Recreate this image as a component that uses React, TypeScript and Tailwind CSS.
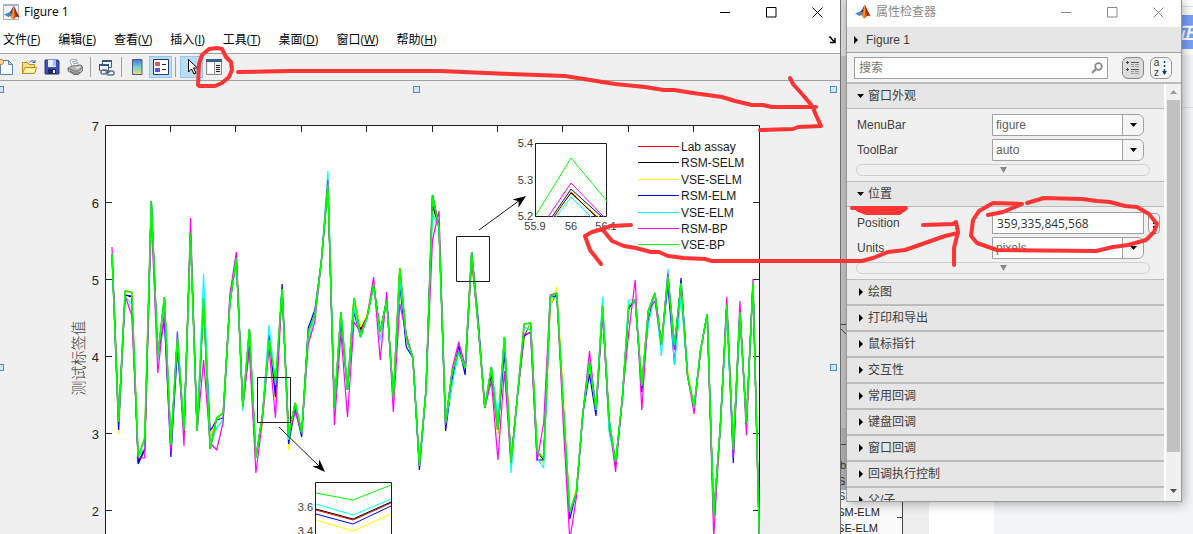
import React from "react";

interface Series {
  color: string;
  changes: Record<number, number>;
}

const UI_FONT = "font-['Liberation_Sans','Noto_Sans_CJK_SC',sans-serif]";
const TITLE_FONT = "font-['Open_Sans','Noto_Sans_CJK_SC',sans-serif]";

// main curve, one sample per 1% of the x axis, in canvas coordinates
const baseline = [
  254, 422, 291, 292, 457, 438, 201, 356, 297, 445, 338, 430, 233, 431, 298, 449, 418, 413, 304, 258,
  407, 329, 458, 415, 340, 380, 289, 435, 403, 433, 332, 315, 262, 185, 408, 312, 390, 298, 337, 317,
  285, 332, 300, 398, 268, 338, 358, 466, 390, 195, 228, 423, 372, 352, 368, 252, 327, 408, 367, 430,
  337, 463, 395, 324, 323, 452, 458, 297, 293, 407, 512, 492, 413, 362, 410, 306, 420, 462, 400, 306,
  300, 386, 311, 293, 345, 277, 345, 283, 376, 407, 350, 314, 517, 427, 305, 450, 312, 423, 283, 545,
];

const series: Series[] = [
  { color: "#ff0000", changes: { 16: 438, 19: 302, 26: 393, 39: 330, 56: 261, 60: 434, 78: 466 } },
  {
    color: "#000000",
    changes: { 3: 295, 4: 297, 5: 462, 6: 449, 15: 305, 26: 392, 39: 329, 50: 205, 59: 374, 60: 433, 64: 337, 67: 460, 68: 305, 77: 428, 80: 308, 88: 288 },
  },
  {
    color: "#ffff00",
    changes: { 2: 434, 3: 293, 15: 300, 16: 437, 24: 424, 26: 402, 28: 450, 39: 327, 40: 313, 42: 340, 50: 211, 60: 435, 64: 340, 67: 464, 68: 307, 69: 287, 70: 395, 72: 488, 88: 293, 89: 370 },
  },
  {
    color: "#0000ff",
    changes: {
      2: 430, 3: 295, 4: 296, 5: 464, 6: 450, 9: 320, 10: 457, 11: 350, 16: 431, 17: 420, 18: 418, 22: 345, 25: 335, 26: 397, 27: 284,
      28: 444, 29: 408, 30: 437, 31: 328, 32: 310, 36: 320, 38: 312, 45: 285, 46: 347, 48: 470, 51: 225, 52: 431, 53: 380, 54: 346,
      55: 375, 57: 320, 61: 352, 64: 336, 65: 332, 66: 460, 67: 460, 69: 296, 71: 519, 74: 374, 75: 416, 78: 464, 80: 307, 82: 392,
      83: 320, 86: 285, 87: 364, 88: 278, 96: 463,
    },
  },
  {
    color: "#00ffff",
    changes: {
      3: 296, 4: 305, 6: 448, 8: 360, 11: 331, 15: 274, 16: 445, 17: 428, 18: 420, 21: 411, 25: 325, 26: 385, 28: 440, 31: 342,
      34: 171, 38: 308, 42: 340, 45: 280, 50: 214, 53: 385, 60: 418, 62: 473, 64: 327, 65: 330, 66: 458, 67: 468, 69: 298, 76: 297,
      77: 432, 80: 300, 83: 325, 85: 356, 86: 269, 87: 365, 88: 297, 95: 316,
    },
  },
  {
    color: "#ff00ff",
    changes: {
      1: 247, 3: 296, 4: 315, 5: 458, 6: 458, 7: 215, 8: 373, 9: 312, 10: 452, 11: 332, 12: 446, 13: 218, 15: 360, 16: 443, 17: 450,
      18: 422, 19: 295, 20: 252, 22: 350, 23: 473, 24: 420, 25: 348, 26: 418, 29: 412, 31: 344, 32: 322, 34: 180, 35: 425, 36: 333,
      37: 417, 38: 322, 39: 332, 41: 277, 42: 360, 43: 292, 44: 412, 45: 304, 46: 334, 50: 240, 51: 211, 52: 425, 53: 369, 54: 342,
      55: 366, 59: 381, 60: 460, 61: 371, 64: 334, 65: 333, 66: 461, 67: 423, 68: 295, 70: 425, 71: 540, 72: 497, 74: 351, 76: 316,
      78: 472, 80: 333, 81: 280, 82: 410, 84: 301, 86: 273, 87: 350, 90: 414, 93: 537, 95: 297, 96: 458, 97: 301, 98: 435, 99: 279,
    },
  },
  { color: "#00ff00", changes: {} },
];

const legend = [
  { label: "Lab assay", color: "#ff0000" },
  { label: "RSM-SELM", color: "#000000" },
  { label: "VSE-SELM", color: "#ffff00" },
  { label: "RSM-ELM", color: "#0000ff" },
  { label: "VSE-ELM", color: "#00ffff" },
  { label: "RSM-BP", color: "#ff00ff" },
  { label: "VSE-BP", color: "#00ff00" },
];

const toPoints = (changes: Record<number, number>) =>
  baseline.map((y, i) => `${(105.5 + 6.54 * (i + 1)).toFixed(1)},${changes[i + 1] ?? y}`).join(" ");

const menus = [
  { text: "文件", hotkey: "F" },
  { text: "编辑", hotkey: "E" },
  { text: "查看", hotkey: "V" },
  { text: "插入", hotkey: "I" },
  { text: "工具", hotkey: "T" },
  { text: "桌面", hotkey: "D" },
  { text: "窗口", hotkey: "W" },
  { text: "帮助", hotkey: "H" },
];

const collapsedGroups = ["绘图", "打印和导出", "鼠标指针", "交互性", "常用回调", "键盘回调", "窗口回调", "回调执行控制", "父/子"];

const MatlabLogo = () => (
  <svg viewBox="0 0 16 16" className="size-4 shrink-0">
    <path d="M0 9.5 5 7.5l2.5 2L4.5 12z" fill="#3d8ec4" />
    <path d="M5 7.5C7 7 8 3 9.8 1L7.5 9.5z" fill="#2b4c7d" />
    <path d="M9.8 1C11 2 13 8 15.8 12.5c-2-1.8-3.5-.8-5 .8C9.5 15 8.5 14.5 7.5 12.5 6.8 11 5.8 11 4.5 12c3-2 4-7 5.3-11z" fill="#d9541e" />
    <path d="M9.8 1c-.6 4-.8 8-2.8 10.5 1 1.5 1.5 3 2.3 3C9.8 10 10.5 5 9.8 1z" fill="#f4a12a" />
    <path d="M10.2 1.8c1 1.8 3 7 5.6 10.7-1.5-1.3-2.8-1-3.8-.4z" fill="#9c2412" />
  </svg>
);

const WindowButtons = ({ className }: { className: string }) => (
  <div className={`ml-auto flex ${className}`}>
    <button aria-label="Minimize" className="flex h-6 w-[46px] items-center justify-center">
      <svg viewBox="0 0 11 11" className="size-[11px]" stroke="currentColor" fill="none">
        <path d="M0 5.5h10" />
      </svg>
    </button>
    <button aria-label="Maximize" className="flex h-6 w-[46px] items-center justify-center">
      <svg viewBox="0 0 11 11" className="size-[11px]" stroke="currentColor" fill="none">
        <path d="M.5.5h9.5v9.5H.5z" />
      </svg>
    </button>
    <button aria-label="Close" className="flex h-6 w-[46px] items-center justify-center">
      <svg viewBox="0 0 11 11" className="size-[11px]" stroke="currentColor" fill="none">
        <path d="m.5.5 10 10m0-10-10 10" />
      </svg>
    </button>
  </div>
);

const NewIcon = () => (
  <svg viewBox="0 0 16 16" className="size-4">
    <path d="M2.5 1.5h8l4 4v10h-12z" fill="#f8fbff" stroke="#6080b8" />
    <path d="M10.5 1.5v4h4z" fill="#c5d7f2" stroke="#6080b8" />
    <circle cx="3" cy="3" r="2.5" fill="#ffe0a0" stroke="#e8732c" />
  </svg>
);

const OpenIcon = () => (
  <svg viewBox="0 0 16 16" className="size-4">
    <path d="M1.5 14.5v-11h5l1.5 2h5.5v9z" fill="#fbe28a" stroke="#c28b1c" />
    <path d="m1.5 14.5 2.5-6h11.5l-2 6z" fill="#fff3ae" stroke="#c28b1c" />
    <path d="M8.500 3.500c1-2 4-2.500 5 0m-2 0h2.500V1" fill="none" stroke="#3a5f93" />
  </svg>
);

const SaveIcon = () => (
  <svg viewBox="0 0 16 16" className="size-4">
    <path d="M1 1h13l1 1v13H1z" fill="#3c4fb5" stroke="#28348c" />
    <path d="M4 1h8v7H4z" fill="#e6eefc" />
    <path d="M9 1h3v6H9z" fill="#a9bce8" />
    <path d="M4 10h8v5H4z" fill="#1e2760" />
    <path d="M9 11h2v3H9z" fill="#fff" />
  </svg>
);

const PrintIcon = () => (
  <svg viewBox="0 0 16 16" className="size-4">
    <path d="m3 1 6-1 3 7-7 1z" fill="#fff" stroke="#9aa3b5" />
    <path d="m5 3 4-1m-3 3 4-1" stroke="#7a93c8" />
    <path d="m1 9 4-2 9-1 1.5 2v4l-4 3.500H7L1 12z" fill="#b9b9b9" stroke="#777" />
    <path d="m1 9 6 3h4.500l4-4M3 12l5 2.500 5-1" fill="none" stroke="#666" />
    <path d="m9 9 4-1" stroke="#fff" />
  </svg>
);

const LinkIcon = () => (
  <svg viewBox="0 0 17 17" className="size-[17px]">
    <path d="M4.500 1.500h9v7h-9z" fill="#fff" stroke="#35598c" />
    <path d="M4 2h10" stroke="#35598c" strokeWidth="2" />
    <path d="M1.500 5.500h9v6h-9z" fill="#fff" stroke="#35598c" />
    <path d="M1 6h10" stroke="#35598c" strokeWidth="2" />
    <g fill="none" stroke="#60758f" strokeWidth="1.5">
      <rect x="3" y="11" width="7" height="4" rx="2" />
      <rect x="9" y="12" width="7" height="4" rx="2" />
    </g>
    <path d="M7 13h5" stroke="#31475f" />
  </svg>
);

const ColorbarIcon = () => (
  <svg viewBox="0 0 16 16" className="size-4">
    <defs>
      <linearGradient id="colorbar" x1="0" x2="0" y1="0" y2="1">
        <stop offset="0" stopColor="#4f6fdc" />
        <stop offset=".5" stopColor="#6fd3d0" />
        <stop offset="1" stopColor="#f7dc72" />
      </linearGradient>
    </defs>
    <path d="M3.500.5h9.500v15H3.500z" fill="url(#colorbar)" stroke="#4a5a80" />
  </svg>
);

const LegendIcon = () => (
  <svg viewBox="0 0 16 16" className="size-4">
    <path d="M.5.5h15v15H.5z" fill="#fff" stroke="#1c3a6c" />
    <path d="M2 3h5v4H2z" fill="#e05555" />
    <path d="M2 9h5v4H2z" fill="#5555e0" />
    <path d="M9 5.500h4m-4 5h4" stroke="#222" />
  </svg>
);

const PointerIcon = () => (
  <svg viewBox="0 0 16 16" className="size-4">
    <path d="M4.500.5v12.500l3-3 2.500 5 2-1-2.500-5h4z" fill="#fff" stroke="#000" />
  </svg>
);

const InspectorIcon = () => (
  <svg viewBox="0 0 16 16" className="size-4">
    <path d="M.5.5h15v15H.5z" fill="#ededed" stroke="#8b8b8b" />
    <path d="M0 0h16v3H0z" fill="#34618c" />
    <path d="M2 4h6v10H2z" fill="#fff" />
    <path d="M8.500 3v12" stroke="#999" />
    <path d="M10 6.500h4m-4 2h4m-4 2h4m-4 2h4" stroke="#222" />
  </svg>
);

const Divider = () => <div className="h-5 w-px bg-[#a0a0a0]" />;

const ArrowHead = ({ x, y, angle }: { x: number; y: number; angle: number }) => (
  <path d="M0 0-13-5-9 0-13 5z" fill="#000" transform={`translate(${x} ${y}) rotate(${angle})`} />
);

const Plot = () => (
  <svg viewBox="0 81 840 453" className={`block w-full ${UI_FONT}`}>
    <defs>
      <clipPath id="zoomTop">
        <rect x="536" y="144" width="71" height="73" />
      </clipPath>
      <clipPath id="axes">
        <rect x="105" y="125" width="656" height="420" />
      </clipPath>
    </defs>
    <path d="M105.500 545V125.500h654V545" fill="#fff" stroke="#1c1c1c" />
    <g stroke="#262626">
      {[1, 2, 3, 4, 5, 6, 7, 8, 9].map((n) => (
        <path key={n} d={`M${Math.floor(105 + n * 65.4) + 0.5} 125v7`} />
      ))}
      {[202.5, 279.5, 356.5, 433.5, 510.5].map((y) => (
        <path key={y} d={`M105 ${y}h7M760 ${y}h-7`} />
      ))}
    </g>
    <g fill="#262626" fontSize="13" textAnchor="end">
      {[7, 6, 5, 4, 3, 2].map((n, i) => (
        <text key={n} x="99" y={131 + i * 77}>
          {n}
        </text>
      ))}
    </g>
    <text transform="translate(84 358) rotate(-90)" textAnchor="middle" fontSize="15" fill="#404040" className="font-light">
      测试标签值
    </text>

    <g clipPath="url(#axes)" fill="none" strokeLinejoin="bevel">
      {series.map((s) => (
        <polyline key={s.color} points={toPoints(s.changes)} stroke={s.color} strokeWidth={s.color === "#00ff00" ? 1.6 : 1.2} />
      ))}
    </g>

    <g fill="none" stroke="#1c1c1c">
      <path d="M456.500 236.500h33v45h-33zM257.500 377.500h33v45h-33z" />
      <path d="M479 230 520 200M279 427l42 41" />
    </g>
    <ArrowHead x={526} y={196} angle={-36} />
    <ArrowHead x={325} y={472} angle={45} />

    {/* magnified peak at x = 56 */}
    <path d="M535.500 143.500h71v73h-71z" fill="#fff" stroke="#1c1c1c" />
    <g clipPath="url(#zoomTop)" fill="none">
      <polyline points="556,217 571,197 591,217" stroke="#00ffff" />
      <polyline points="554,217 571,192 596,217" stroke="#ff0000" />
      <polyline points="553,217 571,193 597,217" stroke="#000000" />
      <polyline points="553,217 571,191 599,217" stroke="#ffff00" />
      <polyline points="552,217 571,189 602,217" stroke="#0000ff" />
      <polyline points="548,217 571,183 604,217" stroke="#ff00ff" />
      <polyline points="536,215 571,158 607,201" stroke="#00ff00" />
    </g>
    <g fill="#404040" fontSize="11">
      <text x="533" y="147" textAnchor="end">5.4</text>
      <text x="533" y="184" textAnchor="end">5.3</text>
      <text x="533" y="220" textAnchor="end">5.2</text>
      <text x="535" y="230" textAnchor="middle">55.9</text>
      <text x="571" y="230" textAnchor="middle">56</text>
      <text x="606" y="230" textAnchor="middle">56.1</text>
    </g>

    {/* magnified valley, cut off by the window edge */}
    <path d="M315.500 545v-62.500h76V545" fill="#fff" stroke="#1c1c1c" />
    <g fill="none">
      <polyline points="316,493 353,500 391,485" stroke="#00ff00" />
      <polyline points="316,504 353,515 391,499" stroke="#00ffff" />
      <polyline points="316,510 353,520 391,503" stroke="#ff0000" />
      <polyline points="316,509 353,519 391,502" stroke="#000000" />
      <polyline points="316,514 353,524 391,506" stroke="#0000ff" />
      <polyline points="316,520 353,531 391,514" stroke="#ffff00" />
    </g>
    <g fill="#404040" fontSize="11" textAnchor="end">
      <text x="313" y="511">3.6</text>
      <text x="313" y="535">3.4</text>
    </g>

    <g fontSize="12">
      {legend.map((item, i) => {
        const y = 147 + Math.round(i * 16.4);
        return (
          <g key={item.label}>
            <path d={`M638 ${y - 0.5}h41`} stroke={item.color} />
            <text x="681" y={y + 4} fill="#1a1a1a">
              {item.label}
            </text>
          </g>
        );
      })}
    </g>

    {/* selection handles */}
    <g fill="#cfe6f7" stroke="#4f8fc0">
      {[
        [0, 89],
        [416, 89],
        [833, 89],
        [0, 367],
        [833, 367],
      ].map(([x, y]) => (
        <rect key={`${x}-${y}`} x={x - 2.5} y={y - 2.5} width="6" height="6" />
      ))}
    </g>
  </svg>
);

const FigureWindow = () => (
  <section className="min-w-0 flex-1 overflow-hidden bg-[#f0f0f0]">
    <header className={`flex h-6 items-center bg-white pl-1 text-[12px] text-black ${TITLE_FONT}`}>
      <div className="-ml-px flex size-4 items-center border border-t-2 border-[#a8b4c4] bg-[#f4f4f4]">
        <MatlabLogo />
      </div>
      <h1 className="ml-1 pl-px">Figure 1</h1>
      <WindowButtons className="text-black" />
    </header>
    <nav className={`flex h-[30px] items-center gap-[18px] border-b border-[#a0a0a0] bg-white pt-[2px] pl-[3px] text-[12px] text-black ${TITLE_FONT}`}>
      {menus.map((m) => (
        <button key={m.hotkey} className="whitespace-nowrap">
          {m.text}(<span className="underline">{m.hotkey}</span>)
        </button>
      ))}
      <svg viewBox="0 0 8 8" className="mr-1 ml-auto size-2" fill="none" stroke="#000">
        <path d="M1 1.500c1-.8 1.500-.5 2 .5l3 3.500M2 6.500h5V2" strokeWidth="1.5" />
      </svg>
    </nav>
    <div className="flex h-[27px] items-center border-b border-[#a0a0a0]">
      <div className="flex items-center gap-[7px]">
        <button aria-label="New" className="-ml-[2px]"><NewIcon /></button>
        <button aria-label="Open"><OpenIcon /></button>
        <button aria-label="Save"><SaveIcon /></button>
        <button aria-label="Print"><PrintIcon /></button>
        <Divider />
        <button aria-label="Link plot"><LinkIcon /></button>
      </div>
      <div className="ml-[6px] flex items-center">
        <Divider />
        <button aria-label="Insert colorbar" className="pr-1 pl-[7px]"><ColorbarIcon /></button>
        <button aria-label="Insert legend" className="flex h-[22px] w-[23px] items-center justify-center border border-[#90c8f6] bg-[#bcdcf4]">
          <LegendIcon />
        </button>
        <div className="pr-1 pl-[3px]"><Divider /></div>
        <button aria-label="Edit plot" className="flex h-[22px] w-[23px] items-center justify-center border border-[#90c8f6] bg-[#bcdcf4]">
          <PointerIcon />
        </button>
        <button aria-label="Open property inspector" className="px-[3px]"><InspectorIcon /></button>
      </div>
    </div>
    <Plot />
  </section>
);

const GroupHeader = ({ title, open = false }: { title: string; open?: boolean }) => (
  <button className="flex h-6 w-full shrink-0 items-center gap-1 bg-[#e6e6e6] pl-[10px] text-left text-[12px] text-[#404040]">
    <svg viewBox="0 0 7 8" className="h-2 w-[7px]">
      <path d={open ? "M0 2h7L3.500 6z" : "M2 0v8l4-4z"} fill="#000" />
    </svg>
    {title}
  </button>
);

const Expander = () => (
  <button aria-label="Show more" className="mr-[14px] ml-[9px] flex h-[12px] items-center justify-center rounded-md border border-[#d0d0d0]">
    <svg viewBox="0 0 7 6" className="h-[6px] w-[7px]">
      <path d="M0 0h7L3.500 6z" fill="#888" />
    </svg>
  </button>
);

const SelectRow = ({ id, value }: { id: string; value: string }) => (
  <div className="flex h-[22px] items-center pl-[10px]">
    <label htmlFor={id} className="w-[135px]">
      {id}
    </label>
    <div className="relative h-[22px] w-[152px]">
      <select id={id} defaultValue={value} className="block h-full w-full appearance-none rounded-r-md border border-[#a0a0a0] bg-white pl-[3px] text-[12px] text-[#606060]">
        <option>{value}</option>
      </select>
      <div className="pointer-events-none absolute inset-y-px right-px flex w-[21px] items-center justify-center rounded-r-md border-l border-[#a0a0a0] bg-[#f5f5f5]">
        <svg viewBox="0 0 7 4" className="h-1 w-[7px]">
          <path d="M0 0h7L3.500 4z" fill="#000" />
        </svg>
      </div>
    </div>
  </div>
);

const Inspector = () => (
  <aside className={`relative mr-[11px] ml-[6px] flex h-[502px] flex-col overflow-hidden border border-t-0 border-[#999] bg-[#f0f0f0] text-[12px] text-[#404040] shadow-[2px_2px_10px_rgba(0,0,0,0.3)] ${UI_FONT}`}>
    <header className="flex h-[27px] shrink-0 items-start bg-white pl-2">
      <div className="flex h-6 items-center gap-[5px] text-[#8a8a8a]">
        <MatlabLogo />
        <h2>属性检查器</h2>
      </div>
      <WindowButtons className="text-[#8a8a8a]" />
    </header>
    <button className="flex h-[26px] shrink-0 items-center gap-2 border-b border-[#a0a0a0] bg-[#e6e6e6] pl-[7px] text-left">
      <svg viewBox="0 0 4 8" className="h-2 w-1">
        <path d="M0 0v8l4-4z" fill="#000" />
      </svg>
      <span>Figure 1</span>
    </button>
    <div className="flex h-[31px] shrink-0 items-center border-b-2 border-[#bcbcbc] bg-[#f3f3f3] pr-[9px] pl-[7px]">
      <div className="flex h-[22px] flex-1 items-center border border-[#a0a0a0] bg-white px-1">
        <input aria-label="搜索" placeholder="搜索" className="min-w-0 flex-1 text-[12px] outline-none placeholder:text-[#777]" />
        <svg viewBox="0 0 12 12" className="size-3" fill="none" stroke="#8a8a8a">
          <circle cx="7.5" cy="4.5" r="3.3" strokeWidth="1.8" />
          <path d="M5 7 1 11" strokeWidth="2.2" />
        </svg>
      </div>
      <button aria-label="Group" className="ml-[14px] flex size-[22px] items-center justify-center rounded-md border border-[#888] bg-[#dcdcdc]">
        <svg viewBox="0 0 16 16" className="size-4" fill="none" stroke="#999">
          <path d="M6 2.500h8M6 9.500h8" stroke="#555" />
          <path d="M6 4.500h3m1 0h4m-8 2h3m1 0h4m-8 5h3m1 0h4m-8 2h3m1 0h4" />
          <path d="M1 2.500h3M2.500 1v3M1 9.500h3M2.500 8v3" stroke="#444" />
        </svg>
      </button>
      <button aria-label="Sort" className="ml-[6px] flex size-[22px] items-center justify-center gap-[2px] rounded-md border border-[#999] bg-[#f8f8f8]">
        <span className="flex flex-col text-[10px] leading-[10px] text-[#333]">
          <span>a</span>
          <span>z</span>
        </span>
        <svg viewBox="0 0 7 16" className="h-4 w-[7px]" fill="none" stroke="#15406b">
          <path d="M3.500 1v2m0 2v2m0 2v5" strokeWidth="1.5" />
          <path d="M1 11h5l-2.500 4z" fill="#15406b" stroke="none" />
        </svg>
      </button>
    </div>

    <div className="flex min-h-0 flex-1">
      <div className="flex min-w-0 flex-1 flex-col overflow-hidden">
        <GroupHeader title="窗口外观" open />
        <div className="flex h-[74px] shrink-0 flex-col gap-[3px] border-y border-[#bcbcbc] pt-[5px]">
          <SelectRow id="MenuBar" value="figure" />
          <SelectRow id="ToolBar" value="auto" />
          <Expander />
        </div>
        <GroupHeader title="位置" open />
        <div className="flex h-[74px] shrink-0 flex-col gap-[3px] border-y border-[#bcbcbc] pt-[5px]">
          <div className="flex h-[22px] items-center pl-[10px]">
            <label htmlFor="Position" className="w-[135px]">
              Position
            </label>
            <input
              id="Position"
              defaultValue="359,335,845,568"
              className={`h-[22px] w-[152px] border border-[#a0a0a0] bg-white pl-1 text-[12px] text-[#333] ${TITLE_FONT}`}
            />
            <button aria-label="Edit position" className="ml-1 flex h-[21px] w-3 items-center justify-center rounded-sm border border-[#a0a0a0] bg-[#f5f5f5]">
              <svg viewBox="0 0 2 10" className="h-[10px] w-[2px]">
                <path d="M0 0h2v2H0zM0 4h2v2H0zM0 8h2v2H0z" fill="#000" />
              </svg>
            </button>
          </div>
          <SelectRow id="Units" value="pixels" />
          <Expander />
        </div>
        {collapsedGroups.map((title) => (
          <div key={title} className="shrink-0 border-b-2 border-[#bcbcbc]">
            <GroupHeader title={title} />
          </div>
        ))}
      </div>
      <div className="flex w-[17px] flex-col items-center border-l-2 border-white bg-[#f0f0f0]">
        <svg viewBox="0 0 7 4" className="my-[6px] h-1 w-[7px]">
          <path d="M0 4h7L3.500 0z" fill="#999" />
        </svg>
        <div className="mb-[37px] w-[13px] flex-1 bg-[#c1c1c1]" />
        <svg viewBox="0 0 7 4" className="mb-2 h-1 w-[7px]">
          <path d="M0 0h7L3.500 4z" fill="#505050" />
        </svg>
      </div>
    </div>
  </aside>
);

// whatever is still visible of the windows below the inspector
const Backdrop = () => (
  <svg viewBox="0 0 353 534" preserveAspectRatio="xMinYMin slice" className={`absolute inset-0 h-full w-full ${UI_FONT}`}>
    <path d="M0 0h353v534H0z" fill="#f3f4f6" />
    <path d="M340 0h13v55h-13z" fill="#fff" />
    <path d="M340 6.500h13M340 107.500h13" stroke="#e0e0e0" />
    <path d="M340 15h13v34h-13z" fill="#78a0f8" />
    <text x="338" y="39" fontSize="17" fill="#fff" className="font-bold italic">
      正
    </text>
    <path d="M0 0h7v56H0z" fill="#dcdcdc" />
    <path d="M0 56h7v372H0z" fill="#c2c2c2" />
    <path d="M0 428h7v75H0z" fill="#b0b0b0" />
    <path d="M0 490h62v44H0z" fill="#fafafa" />
    <path d="M63 500h26v34H63z" fill="#eee" />
    <path d="M89 500h65v34H89z" fill="#fff" />
    <path d="M62.500 500v34M57 517.500h5M0 444.500h7M0 324.500h7M1 329l5 5" stroke="#444" fill="none" />
    <g fontSize="11" fill="#222" textAnchor="end">
      <text x="40" y="516">RSM-ELM</text>
      <text x="38" y="532">VSE-ELM</text>
    </g>
    <g fontSize="11" fill="#333">
      <text x="0" y="469">b</text>
      <text x="-2" y="485">S</text>
      <text x="-2" y="500">S</text>
    </g>
    <path d="M.5 0v534" stroke="#707070" />
  </svg>
);

const RedInk = () => (
  <svg
    viewBox="0 0 1193 534"
    className="pointer-events-none absolute top-0 left-0 w-full"
    fill="none"
    stroke="#ff3535"
    strokeWidth="4"
    strokeLinecap="round"
    strokeLinejoin="round"
  >
    <path d="M198 85 199 64 202 55 209 49 217 48 222 49 226 57 231 62 232 70 229 77 222 83 215 86 199 86" />
    <path d="M238 72 290 71 440 71 510 74 565 76 615 84 645 87 664 90 674 90 693 93 722 97 735 101 752 105 763 105 772 107 816 107" />
    <path d="M790 78 793 84 802 94 813 107 815 113 821 126 798 127 793 129 760 130" />
    <path d="M631 225 610 226 603 229 592 232 585 236 590 250 601 264" />
    <path d="M603 230 612 241 624 246 636 248 651 252 659 252 668 256 684 258 705 259 712 261 862 261 873 258 888 252 905 250 925 243 945 236 958 233" />
    <path d="M923 225 953 224 956 222 958 232 954 248 954 265" />
    <path d="M852 208H906L899 213H866L858 210H897" />
    <path d="M988 215 1003 212 1022 204 993 203 979 211 973 220 971 236 977 243 997 250 1096 251 1113 247 1128 245 1146 240 1154 232 1157 224 1149 214 1137 207 1125 206 1110 202 1097 201 1082 199 1044 198 1027 203" />
  </svg>
);

export default function App() {
  return (
    <main className="relative flex min-h-screen overflow-hidden bg-[#f3f4f6]">
      <FigureWindow />
      <div className="relative w-[353px] shrink-0 overflow-hidden">
        <Backdrop />
        <Inspector />
      </div>
      <RedInk />
    </main>
  );
}
